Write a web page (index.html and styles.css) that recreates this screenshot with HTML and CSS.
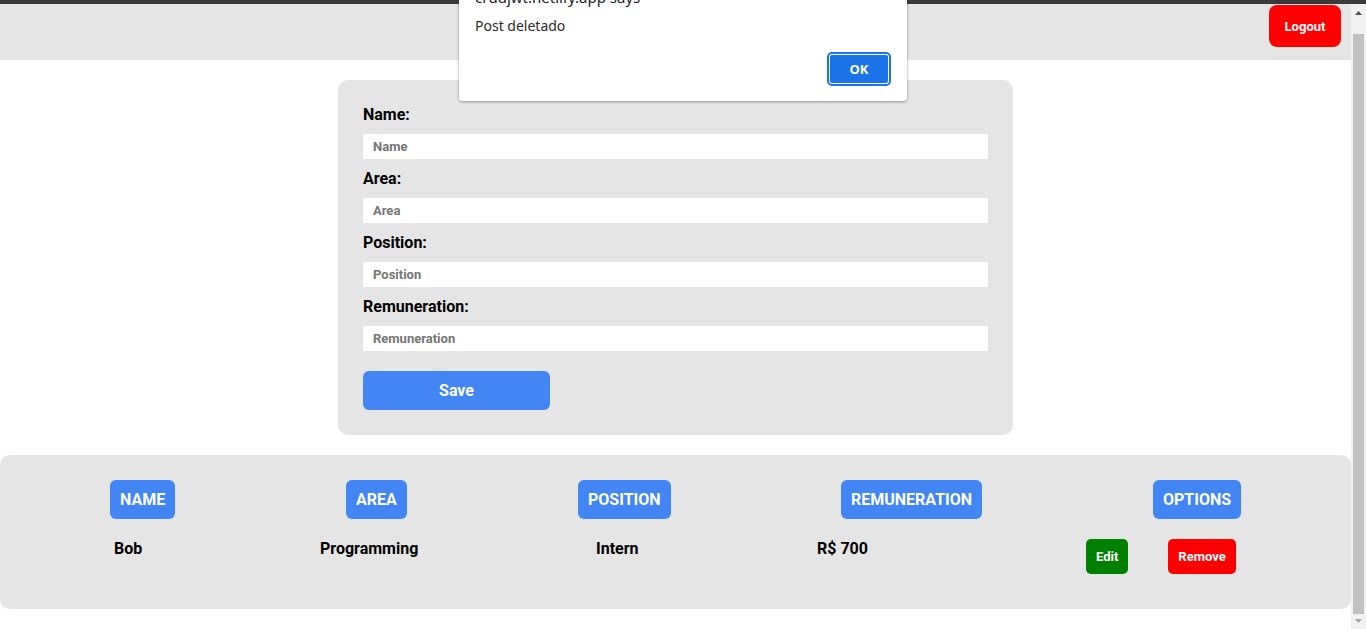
FILE: index.html
```html
<!DOCTYPE html>
<html lang="en">
<head>
<meta charset="utf-8">
<title>CRUD JWT</title>
<link rel="stylesheet" href="styles.css">
</head>
<body>
<div class="chrome-strip"></div>
<div class="viewport">
  <div class="page">
    <header class="topbar">
      <button class="logout">Logout</button>
    </header>

    <form class="form-card">
      <label class="field-label">Name:</label>
      <input class="field-input" type="text" placeholder="Name">
      <label class="field-label">Area:</label>
      <input class="field-input" type="text" placeholder="Area">
      <label class="field-label">Position:</label>
      <input class="field-input" type="text" placeholder="Position">
      <label class="field-label">Remuneration:</label>
      <input class="field-input last" type="text" placeholder="Remuneration">
      <button class="save" type="button">Save</button>
    </form>

    <section class="table-card">
      <div class="head-row">
        <span class="chip">NAME</span>
        <span class="chip">AREA</span>
        <span class="chip">POSITION</span>
        <span class="chip">REMUNERATION</span>
        <span class="chip">OPTIONS</span>
      </div>
      <div class="data-row">
        <span class="cell">Bob</span>
        <span class="cell">Programming</span>
        <span class="cell">Intern</span>
        <span class="cell">R$ 700</span>
        <span class="options">
          <button class="btn-edit" type="button">Edit</button>
          <button class="btn-remove" type="button">Remove</button>
        </span>
      </div>
    </section>
  </div>

  <div class="scrollbar">
    <div class="sb-arrow up">
      <svg width="7" height="4" viewBox="0 0 7 4"><polygon points="0,4 7,4 3.5,0" fill="#505050"/></svg>
    </div>
    <div class="sb-thumb"></div>
    <div class="sb-spacer"></div>
    <div class="sb-arrow down">
      <svg width="7" height="4" viewBox="0 0 7 4"><polygon points="0,0 7,0 3.5,4" fill="#a3a3a3"/></svg>
    </div>
  </div>
</div>

<div class="dialog">
  <div class="dialog-title">crudjwt.netlify.app says</div>
  <div class="dialog-msg">Post deletado</div>
  <div class="dialog-actions">
    <button class="dialog-ok" type="button">OK</button>
  </div>
</div>
</body>
</html>
```

FILE: styles.css
```css
* { box-sizing: border-box; }

html, body {
  margin: 0;
  padding: 0;
  background: #ffffff;
  font-family: Roboto, "Liberation Sans", Arial, sans-serif;
  overflow: hidden;
}

body {
  position: relative;
  width: 1366px;
  height: 629px;
}

.chrome-strip {
  height: 4px;
  background: #3a3a3a;
}

.viewport {
  display: flex;
  height: 625px;
}

.page {
  flex: 1;
  min-width: 0;
  background: #ffffff;
}

/* Header */
.topbar {
  height: 56px;
  background: #e5e5e5;
  display: flex;
  justify-content: flex-end;
  align-items: flex-start;
  padding: 1px 10px 0 0;
}

.logout {
  width: 72px;
  height: 42px;
  border: none;
  border-radius: 8px;
  background: #ff0000;
  color: #ffffff;
  font-family: Roboto, sans-serif;
  font-weight: 700;
  font-size: 13px;
  padding: 0;
  cursor: pointer;
}

/* Form card */
.form-card {
  width: 675px;
  margin: 20px auto 0;
  padding: 25px;
  background: #e5e5e5;
  border-radius: 10px;
  display: flex;
  flex-direction: column;
  align-items: flex-start;
}

.field-label {
  font-weight: 700;
  font-size: 16px;
  line-height: 19px;
  color: #000000;
  margin-bottom: 10px;
}

.field-input {
  width: 100%;
  height: 25px;
  border: none;
  outline: none;
  background: #ffffff;
  padding: 0 10px;
  margin: 0 0 10px;
  font-family: Roboto, sans-serif;
  font-weight: 700;
  font-size: 13px;
  color: #000000;
}

.field-input::placeholder {
  color: #757575;
  font-weight: 700;
}

.field-input.last {
  margin-bottom: 20px;
}

.save {
  width: 187px;
  height: 39px;
  border: none;
  border-radius: 6px;
  background: #4285f4;
  color: #ffffff;
  font-family: Roboto, sans-serif;
  font-weight: 700;
  font-size: 16px;
  padding: 0;
}

/* Table card */
.table-card {
  margin-top: 20px;
  background: #e5e5e5;
  border-radius: 10px;
  padding: 25px 0 35px;
}

.head-row {
  display: grid;
  grid-template-columns: 236px 232px 263px 312px auto;
  padding-left: 110px;
  justify-items: start;
}

.chip {
  height: 39px;
  line-height: 39px;
  padding: 0 10px;
  border-radius: 6px;
  background: #4285f4;
  color: #ffffff;
  font-weight: 700;
  font-size: 16px;
}

.data-row {
  display: grid;
  grid-template-columns: 206px 276px 221px 269px auto;
  padding-left: 114px;
  margin-top: 20px;
  align-items: start;
  justify-items: start;
}

.cell {
  font-weight: 700;
  font-size: 16px;
  line-height: 19px;
  color: #000000;
}

.options {
  display: flex;
  gap: 40px;
}

.btn-edit,
.btn-remove {
  height: 35px;
  border: none;
  border-radius: 5px;
  color: #ffffff;
  font-family: Roboto, sans-serif;
  font-weight: 700;
  font-size: 13px;
  padding: 0 10px;
}

.btn-edit { background: #008000; }
.btn-remove { background: #ff0000; }

/* Fake scrollbar */
.scrollbar {
  width: 15px;
  background: #f1f1f1;
  display: flex;
  flex-direction: column;
  align-items: center;
}

.sb-arrow {
  height: 15px;
  width: 15px;
  display: flex;
  justify-content: center;
}

.sb-arrow.up { padding-top: 7px; }
.sb-arrow.down { padding-top: 5px; }

.sb-arrow svg { display: block; }

.sb-thumb {
  width: 11px;
  height: 580px;
  margin-top: 15px;
  background: #c1c1c1;
}

.sb-spacer { flex: 1; }

/* Browser alert dialog (overlays the page) */
.dialog {
  position: absolute;
  left: 459px;
  top: -30px;
  width: 448px;
  padding: 17px 18px 17px 16px;
  background: #ffffff;
  border-radius: 3px;
  box-shadow: 0 1px 3px rgba(0, 0, 0, 0.35), 0 0 1px rgba(0, 0, 0, 0.25);
  font-family: "Noto Sans", "Open Sans", sans-serif;
}

.dialog-title {
  font-size: 15px;
  line-height: 20px;
  color: #202124;
}

.dialog-msg {
  margin-top: 9px;
  font-size: 14px;
  line-height: 20px;
  color: #2b2b2b;
}

.dialog-actions {
  display: flex;
  justify-content: flex-end;
  margin-top: 18px;
}

.dialog-ok {
  width: 60px;
  height: 30px;
  border: none;
  border-radius: 3px;
  background: #1a73e8;
  box-shadow: inset 0 0 0 1px #ffffff, 0 0 0 2px #1a73e8;
  color: #ffffff;
  font-family: "Noto Sans", "Open Sans", sans-serif;
  font-weight: 700;
  font-size: 13px;
  padding: 0;
}
```
